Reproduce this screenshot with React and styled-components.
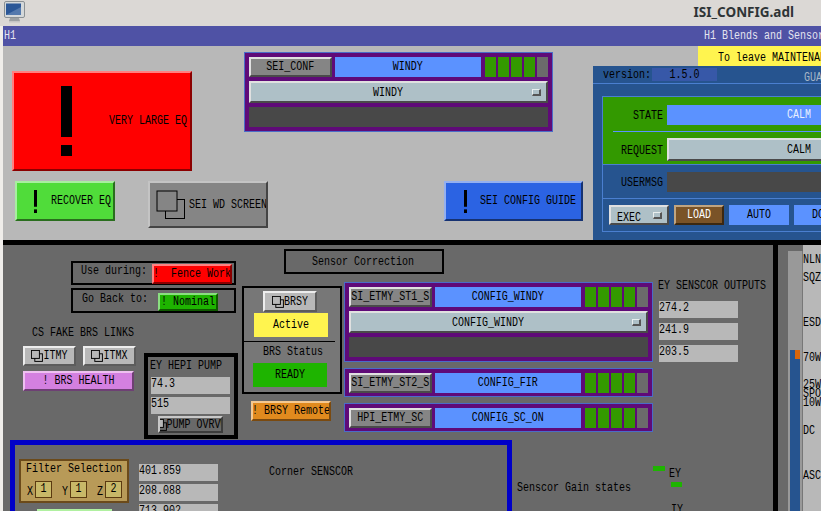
import React from 'react'
import styled, { createGlobalStyle, css } from 'styled-components'

const GlobalStyle = createGlobalStyle`
	html, body {
		margin: 0;
		padding: 0;
		background: #efedea;
	}
`

const place = css`
	position: absolute;
	left: ${(p) => p.$x}px;
	top: ${(p) => p.$y}px;
	width: ${(p) => p.$w}px;
	height: ${(p) => p.$h}px;
	box-sizing: border-box;
`

const bevel = css`
	border-style: solid;
	border-width: 2px;
	border-color: ${(p) => p.$light || '#e0e0e0'} ${(p) => p.$dark || '#4a4a4a'} ${(p) => p.$dark || '#4a4a4a'} ${(p) => p.$light || '#e0e0e0'};
`

const Bang = ({ w, h }) => (
	<svg width={w} height={h} viewBox='0 0 11 70' preserveAspectRatio='none' style={{ flexShrink: 0 }}>
		<rect x='0' y='0' width='11' height='51' fill='#000' />
		<rect x='0' y='59' width='11' height='11' fill='#000' />
	</svg>
)

const Windows = ({ size }) => (
	<svg width={size} height={size} viewBox='0 0 30 30' style={{ flexShrink: 0 }}>
		<rect x='9.5' y='9.5' width='19' height='19' fill='none' stroke='#000' strokeWidth={size > 20 ? 1 : 2.4} />
		<rect x='1' y='1' width='20' height='20' fill={size > 20 ? '#858585' : '#b8b8b8'} stroke='#000' strokeWidth={size > 20 ? 1 : 2.4} />
	</svg>
)

const Monitor = () => (
	<svg width='21' height='22' viewBox='0 0 21 22'>
		<rect x='0.5' y='0.5' width='20' height='16' rx='1.5' fill='#d4d8da' stroke='#8a9094' />
		<rect x='2' y='2.5' width='15' height='11.5' fill='#2b5797' />
		<path d='M2 14 L17 6 L17 14 Z' fill='#5479ad' />
		<path d='M6 17 L15 17 L16 20 L5 20 Z' fill='#9ca0a2' />
		<rect x='5' y='20' width='11' height='1.5' fill='#c4c4c4' />
	</svg>
)

const T = styled.span`
	display: inline-block;
	flex-shrink: 0;
	font-family: 'Liberation Mono', monospace;
	font-size: 10px;
	line-height: 10px;
	white-space: pre;
	transform: scaleY(1.35);
	color: ${(p) => p.$color || '#000'};
`

const Page = styled.div`
	width: 821px;
	height: 511px;
	overflow: hidden;
	display: flex;
	flex-direction: column;
	background: #efedea;
`

const TitleBar = styled.div`
	height: 26px;
	flex-shrink: 0;
	display: flex;
	align-items: center;
	padding: 0 27px 2px 4px;
	box-sizing: border-box;
	background: #dbd8d5;
`

const Title = styled.div`
	margin-left: auto;
	font-family: 'Noto Sans', sans-serif;
	font-weight: 700;
	font-size: 13.5px;
	color: #2e3436;
`

const Screen = styled.div`
	margin-left: 3px;
	flex: 1;
	min-height: 0;
	display: flex;
	flex-direction: column;
`

const HeaderBar = styled.div`
	height: 20px;
	flex-shrink: 0;
	display: flex;
	align-items: center;
	padding-left: 1px;
	background: #4f52a5;
	overflow: hidden;
`

const HeaderRight = styled.div`
	margin-left: 688px;
	flex-shrink: 0;
	padding-bottom: 6px;
`

const TopPane = styled.div`
	position: relative;
	height: 194px;
	flex-shrink: 0;
	overflow: hidden;
	background: #b8b8b8;
`

const BlackRule = styled.div`
	height: 5px;
	flex-shrink: 0;
	background: #000;
`

const BottomPane = styled.div`
	flex: 1;
	min-height: 0;
	display: flex;
	background: #696969;
`

const Canvas = styled.div`
	position: relative;
	width: 770px;
	flex-shrink: 0;
	overflow: hidden;
`

const Divider = styled.div`
	width: 5px;
	flex-shrink: 0;
	background: #000;
`

const ScaleZone = styled.div`
	flex: 1;
	display: flex;
	padding-left: 10px;
`

const Rail = styled.div`
	position: relative;
	width: 15px;
	flex-shrink: 0;
	margin-top: 6px;
	box-sizing: border-box;
	background: #999;
	border-right: 1px solid #777;
`

const RailFill = styled.div`
	position: absolute;
	left: 2px;
	top: 99px;
	bottom: 0;
	width: 10px;
	background: #26548f;
`

const RailMark = styled.div`
	position: absolute;
	left: 7px;
	top: 99px;
	width: 5px;
	height: 9px;
	background: #d8650a;
`

const ScaleLabels = styled.div`
	position: relative;
	flex: 1;
	background: #b8b8b8;
	overflow: hidden;
`

const ScaleLabel = styled.div`
	position: absolute;
	left: 0;
	top: ${(p) => p.$y}px;
	line-height: 10px;
`

const Button = styled.div`
	${place}
	${bevel}
	display: flex;
	align-items: center;
	justify-content: ${(p) => (p.$left ? 'flex-start' : 'center')};
	padding-left: ${(p) => p.$pad || 0}px;
	gap: ${(p) => p.$gap || 0}px;
	overflow: hidden;
	background: ${(p) => p.$bg || '#858585'};
`

const Label = styled.div`
	${place}
	display: flex;
	align-items: center;
`

const Box = styled.div`
	${place}
	border: ${(p) => p.$border || 2}px solid ${(p) => p.$color || '#000'};
	background: ${(p) => p.$bg || 'transparent'};
`

const Readback = styled.div`
	${place}
	display: flex;
	align-items: center;
	padding-bottom: 3px;
	background: #b8b8b8;
`

const Lamp = styled.div`
	${place}
	display: flex;
	align-items: center;
	justify-content: center;
	background: ${(p) => p.$bg};
`

const Rule = styled.div`
	${place}
	background: #000;
`

const NodeColumn = styled.div`
	position: absolute;
	left: ${(p) => p.$x}px;
	top: ${(p) => p.$y}px;
	display: flex;
	flex-direction: column;
	gap: 6px;
`

const NodeBox = styled.div`
	width: 309px;
	box-sizing: border-box;
	display: flex;
	flex-direction: column;
	gap: 4px;
	padding: 4px 4px ${(p) => (p.$compact ? 3 : 4)}px;
	border: 1px solid #4a6cc8;
	background: #5f0a78;
`

const NodeRow = styled.div`
	display: flex;
	height: 20px;
`

const NodeName = styled.div`
	${bevel}
	width: 83px;
	box-sizing: border-box;
	display: flex;
	align-items: center;
	justify-content: center;
	overflow: hidden;
	background: #858585;
`

const NodeState = styled.div`
	width: 147px;
	margin: 0 4px 0 3px;
	display: flex;
	align-items: center;
	justify-content: center;
	background: #5b92ff;
`

const Leds = styled.div`
	display: flex;
	gap: 2px;
`

const Led = styled.div`
	width: 11px;
	background: ${(p) => (p.$off ? '#6b6b6b' : '#339900')};
`

const Menu = styled.div`
	${bevel}
	box-sizing: border-box;
	width: ${(p) => p.$w || 299}px;
	height: ${(p) => p.$h || 22}px;
	flex-shrink: 0;
	display: flex;
	align-items: center;
	background: #aec0c7;
`

const MenuText = styled.div`
	flex: 1;
	padding-left: ${(p) => p.$pad || 0}px;
	padding-bottom: ${(p) => (p.$pad ? 0 : 4)}px;
	text-align: ${(p) => (p.$pad ? 'left' : 'center')};
`

const MenuMark = styled.div`
	width: 9px;
	height: 7px;
	margin: 0 5px 0 7px;
	box-sizing: border-box;
	border-style: solid;
	border-width: 1px 2px 2px 1px;
	border-color: #e8eeee #555 #555 #e8eeee;
	background: #aec0c7;
`

const DarkBar = styled.div`
	height: ${(p) => p.$h || 20}px;
	background: #484848;
`

const Banner = styled.div`
	position: absolute;
	left: 695px;
	top: 0;
	width: 123px;
	height: 20px;
	display: flex;
	align-items: center;
	overflow: hidden;
	padding: 4px 0 0 20px;
	box-sizing: border-box;
	background: #fff44f;
`

const Guardian = styled.div`
	position: absolute;
	left: 590px;
	top: 20px;
	width: 228px;
	height: 174px;
	overflow: hidden;
	background: #26548f;
`

const GuardianHead = styled.div`
	height: 17px;
	display: flex;
	align-items: center;
	padding-left: 10px;
	border-bottom: 1px solid #4a7fd0;
`

const VersionField = styled.div`
	width: 65px;
	height: 13px;
	flex-shrink: 0;
	margin-left: 1px;
	display: flex;
	align-items: center;
	justify-content: center;
	background: #3758a8;
`

const GuardTitle = styled.div`
	margin-left: 87px;
	flex-shrink: 0;
`

const GuardBody = styled.div`
	width: 400px;
	margin: 12px 0 0 9px;
	border: 1px solid #4a7fd0;
	display: flex;
	flex-direction: column;
`

const GreenSection = styled.div`
	height: 68px;
	padding-top: 7px;
	box-sizing: border-box;
	background: #339900;
	border-bottom: 1px solid #4a7fd0;
`

const GuardRow = styled.div`
	display: flex;
	align-items: center;
	gap: 4px;
`

const GuardLabel = styled.div`
	width: 60px;
	text-align: right;
	padding-bottom: 3px;
`

const GuardField = styled.div`
	width: 264px;
	height: 20px;
	display: flex;
	align-items: center;
	justify-content: center;
	background: #5b92ff;
`

const GuardLine = styled.div`
	height: 1px;
	margin: 6px 0 6px 10px;
	background: #5b92ff;
`

const RequestField = styled.div`
	${bevel}
	width: 264px;
	height: 23px;
	box-sizing: border-box;
	display: flex;
	align-items: center;
	justify-content: center;
	background: #aec0c7;
`

const MsgSection = styled.div`
	padding: 6px 0;
	border-bottom: 1px solid #4a7fd0;
`

const MsgField = styled.div`
	width: 264px;
	height: 20px;
	background: #484848;
`

const Tools = styled.div`
	display: flex;
	gap: 5px;
	padding: 6px;
`

const LoadButton = styled.div`
	${bevel}
	width: 50px;
	height: 20px;
	box-sizing: border-box;
	flex-shrink: 0;
	display: flex;
	align-items: center;
	justify-content: center;
	background: #7a5327;
`

const ModeButton = styled.div`
	width: 60px;
	height: 20px;
	flex-shrink: 0;
	display: flex;
	align-items: center;
	justify-content: center;
	background: #5b92ff;
`

const Frame = styled.div`
	${place}
	border: 5px solid #0000c8;
`

const FilterPanel = styled.div`
	${place}
	display: flex;
	flex-direction: column;
	gap: 6px;
	padding: 3px 5px 0;
	border: 2px solid #6b4a1a;
	background: #b89a58;
`

const FilterRow = styled.div`
	display: flex;
	align-items: center;
	padding-left: 1px;
`

const FilterAxis = styled.div`
	width: 8px;
	margin-left: ${(p) => (p.$first ? 0 : 10)}px;
`

const FilterField = styled.div`
	width: 17px;
	height: 17px;
	box-sizing: border-box;
	display: flex;
	align-items: center;
	justify-content: center;
	border: 1px solid #5b3a10;
	background: #c8b868;
`

const NodeHeader = ({ name, state, offLast = true }) => (
	<NodeRow>
		<NodeName>
			<T>{name}</T>
		</NodeName>
		<NodeState>
			<T>{state}</T>
		</NodeState>
		<Leds>
			<Led />
			<Led />
			<Led />
			<Led />
			<Led $off={offLast} />
		</Leds>
	</NodeRow>
)

const NodeMenu = ({ value }) => (
	<Menu>
		<MenuText>
			<T>{value}</T>
		</MenuText>
		<MenuMark />
	</Menu>
)

const scaleMarks = [
	['NLN', 7],
	['SQZ', 25],
	['ESD', 70],
	['70W', 105],
	['25W', 132],
	['SPO', 141],
	['10W', 150],
	['DC', 178],
	['ASC', 223],
]

const App = () => {
	return (
		<Page>
			<GlobalStyle />
			<TitleBar>
				<Monitor />
				<Title>ISI_CONFIG.adl</Title>
			</TitleBar>
			<Screen>
				<HeaderBar>
					<T $color='#e4e4f0'>H1</T>
					<HeaderRight>
						<T $color='#e4e4f0'>H1 Blends and Sensor Correction</T>
					</HeaderRight>
				</HeaderBar>
				<TopPane>
					<Button $x={9} $y={25} $w={180} $h={100} $bg='#ff0000' $light='#ff8080' $dark='#8b0000' $left $pad={47} $gap={37}>
						<Bang w={11} h={70} />
						<T>VERY LARGE EQ</T>
					</Button>
					<Button $x={12} $y={135} $w={100} $h={40} $bg='#50dc3a' $light='#a8eea0' $dark='#2a6e1e' $left $pad={17} $gap={14}>
						<Bang w={3} h={23} />
						<T>RECOVER EQ</T>
					</Button>
					<Button $x={145} $y={135} $w={120} $h={47} $bg='#858585' $light='#c4c4c4' $dark='#444' $left $pad={6} $gap={3}>
						<Windows size={30} />
						<T>SEI WD SCREEN</T>
					</Button>
					<Button $x={441} $y={135} $w={139} $h={40} $bg='#2b63e3' $light='#94b0f0' $dark='#163272' $left $pad={18} $gap={13}>
						<Bang w={3} h={23} />
						<T>SEI CONFIG GUIDE</T>
					</Button>
					<NodeColumn $x={241} $y={6}>
						<NodeBox>
							<NodeHeader name='SEI_CONF' state='WINDY' />
							<NodeMenu value='WINDY' />
							<DarkBar />
						</NodeBox>
					</NodeColumn>
					<Banner>
						<T>To leave MAINTENANCE</T>
					</Banner>
					<Guardian>
						<GuardianHead>
							<T>version:</T>
							<VersionField>
								<T>1.5.0</T>
							</VersionField>
							<GuardTitle>
								<T $color='#a8b8c8'>GUARDIAN</T>
							</GuardTitle>
						</GuardianHead>
						<GuardBody>
							<GreenSection>
								<GuardRow>
									<GuardLabel>
										<T>STATE</T>
									</GuardLabel>
									<GuardField>
										<T $color='#e8f0ff'>CALM</T>
									</GuardField>
								</GuardRow>
								<GuardLine />
								<GuardRow>
									<GuardLabel>
										<T>REQUEST</T>
									</GuardLabel>
									<RequestField>
										<T>CALM</T>
									</RequestField>
								</GuardRow>
							</GreenSection>
							<MsgSection>
								<GuardRow>
									<GuardLabel>
										<T>USERMSG</T>
									</GuardLabel>
									<MsgField />
								</GuardRow>
							</MsgSection>
							<Tools>
								<Menu $w={60} $h={20}>
									<MenuText $pad={6}>
										<T>EXEC</T>
									</MenuText>
									<MenuMark />
								</Menu>
								<LoadButton $light='#c0a480' $dark='#3c2810'>
									<T $color='#fff'>LOAD</T>
								</LoadButton>
								<ModeButton>
									<T>AUTO</T>
								</ModeButton>
								<ModeButton>
									<T>DOWN</T>
								</ModeButton>
							</Tools>
						</GuardBody>
					</Guardian>
				</TopPane>
				<BlackRule />
				<BottomPane>
					<Canvas>
						<Box $x={281} $y={4} $w={160} $h={25} />
						<Label $x={309} $y={4} $w={110} $h={25}>
							<T>Sensor Correction</T>
						</Label>

						<Box $x={68} $y={16} $w={165} $h={24} />
						<Label $x={78} $y={16} $w={70} $h={20}>
							<T>Use during:</T>
						</Label>
						<Button $x={149} $y={19} $w={80} $h={20} $bg='#ff0000' $light='#ff8080' $dark='#8b0000'>
							<T>!  Fence Work</T>
						</Button>
						<Box $x={68} $y={43} $w={165} $h={25} />
						<Label $x={79} $y={44} $w={70} $h={20}>
							<T>Go Back to:</T>
						</Label>
						<Button $x={155} $y={48} $w={60} $h={18} $bg='#1eb400' $light='#8ade80' $dark='#0f5a00'>
							<T>! Nominal</T>
						</Button>

						<Label $x={29} $y={78} $w={110} $h={20}>
							<T>CS FAKE BRS LINKS</T>
						</Label>
						<Button $x={20} $y={101} $w={53} $h={20} $bg='#b8b8b8' $light='#ededed' $dark='#5c5c5c'>
							<Windows size={12} />
							<T>ITMY</T>
						</Button>
						<Button $x={80} $y={101} $w={53} $h={20} $bg='#b8b8b8' $light='#ededed' $dark='#5c5c5c'>
							<Windows size={12} />
							<T>ITMX</T>
						</Button>
						<Button $x={20} $y={126} $w={111} $h={20} $bg='#d480e0' $light='#eec0f0' $dark='#6e4074'>
							<T>! BRS HEALTH</T>
						</Button>

						<Box $x={141} $y={108} $w={94} $h={86} $border={4} $bg='#696969' />
						<Label $x={147} $y={111} $w={85} $h={20}>
							<T>EY HEPI PUMP</T>
						</Label>
						<Readback $x={148} $y={132} $w={79} $h={17}>
							<T>74.3</T>
						</Readback>
						<Readback $x={148} $y={152} $w={79} $h={17}>
							<T>515</T>
						</Readback>
						<Button $x={155} $y={171} $w={65} $h={17} $bg='#696969' $light='#c8c8c8' $dark='#3c3c3c'>
							<Windows size={12} />
							<T>PUMP OVRVW</T>
						</Button>

						<Box $x={239} $y={41} $w={100} $h={108} $bg='#777' />
						<Button $x={260} $y={46} $w={54} $h={21} $bg='#b8b8b8' $light='#ededed' $dark='#5c5c5c'>
							<Windows size={12} />
							<T>BRSY</T>
						</Button>
						<Lamp $x={251} $y={68} $w={74} $h={24} $bg='#fff44f'>
							<T>Active</T>
						</Lamp>
						<Rule $x={241} $y={96} $w={91} $h={1} />
						<Label $x={260} $y={97} $w={70} $h={20}>
							<T>BRS Status</T>
						</Label>
						<Lamp $x={250} $y={118} $w={74} $h={24} $bg='#1eb400'>
							<T>READY</T>
						</Lamp>
						<Button $x={248} $y={156} $w={80} $h={20} $bg='#e08a1e' $light='#f4c890' $dark='#7a4a10'>
							<T>! BRSY Remote</T>
						</Button>

						<NodeColumn $x={341} $y={37}>
							<NodeBox>
								<NodeHeader name='SI_ETMY_ST1_S' state='CONFIG_WINDY' />
								<NodeMenu value='CONFIG_WINDY' />
								<DarkBar />
							</NodeBox>
							<NodeBox $compact>
								<NodeHeader name='SI_ETMY_ST2_S' state='CONFIG_FIR' />
							</NodeBox>
							<NodeBox $compact>
								<NodeHeader name='HPI_ETMY_SC' state='CONFIG_SC_ON' />
							</NodeBox>
						</NodeColumn>

						<Label $x={655} $y={31} $w={115} $h={20}>
							<T>EY SENSCOR OUTPUTS</T>
						</Label>
						<Readback $x={656} $y={56} $w={79} $h={17}>
							<T>274.2</T>
						</Readback>
						<Readback $x={656} $y={78} $w={79} $h={17}>
							<T>241.9</T>
						</Readback>
						<Readback $x={656} $y={100} $w={79} $h={17}>
							<T>203.5</T>
						</Readback>

						<Frame $x={7} $y={195} $w={502} $h={200} />
						<FilterPanel $x={16} $y={214} $w={110} $h={44}>
							<T>Filter Selection</T>
							<FilterRow>
								<FilterAxis $first>
									<T>X</T>
								</FilterAxis>
								<FilterField>
									<T>1</T>
								</FilterField>
								<FilterAxis>
									<T>Y</T>
								</FilterAxis>
								<FilterField>
									<T>1</T>
								</FilterField>
								<FilterAxis>
									<T>Z</T>
								</FilterAxis>
								<FilterField>
									<T>2</T>
								</FilterField>
							</FilterRow>
						</FilterPanel>
						<Readback $x={136} $y={219} $w={79} $h={17}>
							<T>401.859</T>
						</Readback>
						<Readback $x={136} $y={239} $w={79} $h={17}>
							<T>208.088</T>
						</Readback>
						<Readback $x={136} $y={259} $w={79} $h={17}>
							<T>713.902</T>
						</Readback>
						<Lamp $x={34} $y={264} $w={75} $h={10} $bg='#b0f0a0' />
						<Label $x={266} $y={217} $w={90} $h={20}>
							<T>Corner SENSCOR</T>
						</Label>
						<Label $x={514} $y={233} $w={120} $h={20}>
							<T>Senscor Gain states</T>
						</Label>
						<Lamp $x={650} $y={221} $w={12} $h={5} $bg='#1eb400' />
						<Label $x={666} $y={219} $w={14} $h={20}>
							<T>EY</T>
						</Label>
						<Lamp $x={668} $y={237} $w={11} $h={5} $bg='#1eb400' />
						<Label $x={668} $y={255} $w={14} $h={20}>
							<T>IY</T>
						</Label>
					</Canvas>
					<Divider />
					<ScaleZone>
						<Rail>
							<RailFill />
							<RailMark />
						</Rail>
						<ScaleLabels>
							{scaleMarks.map(([text, y]) => (
								<ScaleLabel key={text} $y={y}>
									<T>{text}</T>
								</ScaleLabel>
							))}
						</ScaleLabels>
					</ScaleZone>
				</BottomPane>
			</Screen>
		</Page>
	)
}

export default App
